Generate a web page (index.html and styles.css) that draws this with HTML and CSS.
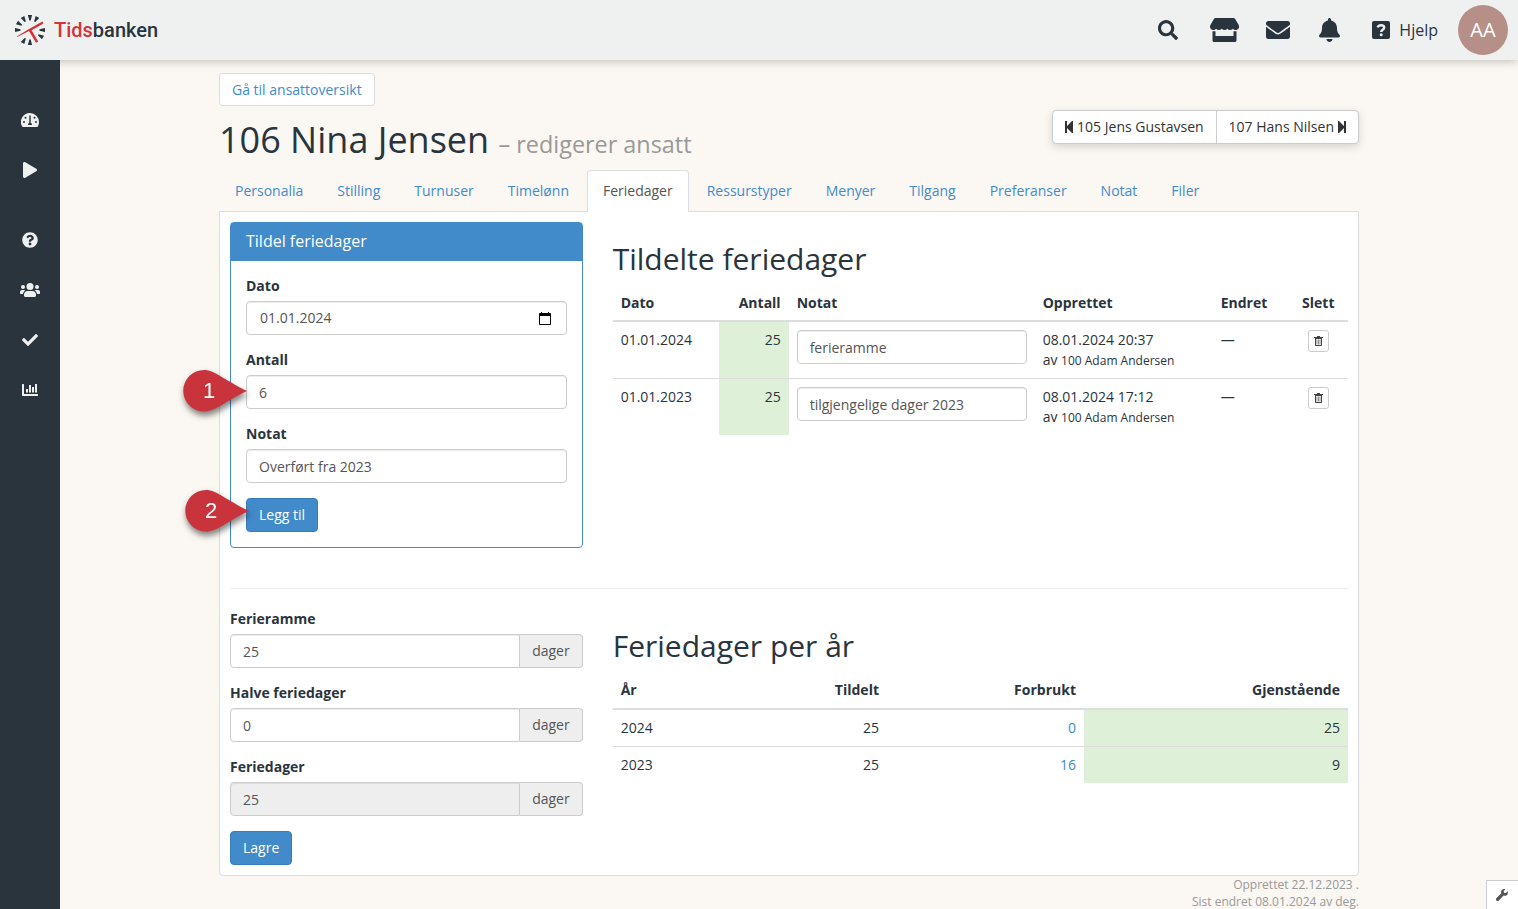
FILE: index.html
```html
<!DOCTYPE html>
<html lang="nb">
<head>
<meta charset="utf-8">
<title>106 Nina Jensen – Tidsbanken</title>
<meta name="viewport" content="width=device-width, initial-scale=1">
<link rel="stylesheet" href="styles.css">
</head>
<body>
<header class="topbar">
  <a class="brand" href="#" aria-label="Tidsbanken">
    <svg class="brand-mark" viewBox="0 0 32 32" aria-hidden="true">
      <g fill="#2a343d">
        <path d="M13.900 1h4.200L16.700 6.500h-1.400z"/>
        <path d="M13.900 1h4.200L16.700 6.500h-1.400z" transform="rotate(30 16 16)"/>
        <path d="M13.900 1h4.200L16.700 6.500h-1.400z" transform="rotate(90 16 16)"/>
        <path d="M13.900 1h4.200L16.700 6.500h-1.400z" transform="rotate(120 16 16)"/>
        <path d="M13.900 1h4.200L16.700 6.500h-1.400z" transform="rotate(180 16 16)"/>
        <path d="M13.900 1h4.200L16.700 6.500h-1.400z" transform="rotate(210 16 16)"/>
        <path d="M13.900 1h4.200L16.700 6.500h-1.400z" transform="rotate(270 16 16)"/>
        <path d="M13.900 1h4.200L16.700 6.500h-1.400z" transform="rotate(300 16 16)"/>
        <path d="M13.900 1h4.200L16.700 6.500h-1.400z" transform="rotate(330 16 16)"/>
      </g>
      <path d="M2.800 22.400L15 15 28.400 7.600l1.100 2L17.600 16.200l6.600 11.400-2.200 1.200L15 17 3.200 23z" fill="#d2333b"/>
    </svg>
    <span class="brand-name"><span class="brand-red">Tids</span>banken</span>
  </a>
  <nav class="tools" aria-label="Verktøy">
    <button class="tool" aria-label="Søk"><svg width="20" height="20" viewBox="0 0 512 512"><path d="M505 442.7L405.3 343c-4.5-4.5-10.6-7-17-7H372c27.6-35.3 44-79.7 44-128C416 93.1 322.9 0 208 0S0 93.1 0 208s93.1 208 208 208c48.300 0 92.700-16.400 128-44v16.300c0 6.400 2.500 12.500 7 17l99.700 99.700c9.400 9.400 24.600 9.400 33.900 0l28.300-28.300c9.400-9.400 9.400-24.600.1-34zM208 336c-70.700 0-128-57.200-128-128 0-70.700 57.200-128 128-128 70.700 0 128 57.200 128 128 0 70.700-57.200 128-128 128z"/></svg></button>
    <button class="tool tool-shop" aria-label="Butikk"><svg width="30" height="24" viewBox="0 0 30 24"><path d="M5.500 0h18c.7 0 1.300.3 1.700.9l3.500 6.100c1 2.200 0 4.500-2.300 4.900-1.500.2-2.700-.3-3.500-1.200-1.400 1.600-4.100 1.600-5.600 0-1.400 1.600-4.100 1.600-5.600 0-1.500 1.600-4.200 1.600-5.600 0-.8.900-2 1.400-3.500 1.200C.4 11.500-.6 9.200.4 7L3.900.9C4.200.3 4.800 0 5.500 0z"/><path d="M2.500 13.200h3V18h18v-4.800h3v9.300c0 .8-.7 1.500-1.500 1.500H4c-.8 0-1.500-.7-1.500-1.500z"/></svg></button>
    <button class="tool tool-mail" aria-label="Meldinger"><svg width="24" height="24" viewBox="0 0 512 512"><path d="M502.300 190.800c3.900-3.100 9.700-.2 9.700 4.700V400c0 26.500-21.500 48-48 48H48c-26.500 0-48-21.500-48-48V195.600c0-5 5.700-7.800 9.700-4.700 22.400 17.400 52.100 39.500 154.100 113.600 21.100 15.400 56.700 47.800 92.200 47.600 35.700.3 72-32.800 92.300-47.600 102-74.100 131.600-96.300 154-113.700zM256 320c23.200.4 56.600-29.200 73.400-41.400 132.700-96.300 142.800-104.700 173.400-128.700 5.800-4.500 9.200-11.500 9.200-18.900v-19c0-26.500-21.500-48-48-48H48c-26.500 0-48 21.500-48 48v19c0 7.400 3.400 14.300 9.200 18.900 30.600 23.900 40.700 32.400 173.400 128.700 16.800 12.200 50.200 41.800 73.400 41.400z"/></svg></button>
    <button class="tool" aria-label="Varsler"><svg width="21" height="24" viewBox="0 0 448 512"><path d="M224 512c35.320 0 63.970-28.650 63.970-64H160.030c0 35.350 28.650 64 63.970 64zm215.390-149.710c-19.320-20.760-55.470-51.990-55.470-154.290 0-77.700-54.480-139.900-127.940-155.160V32c0-17.670-14.320-32-31.980-32s-31.980 14.330-31.980 32v20.840C118.560 68.100 64.080 130.300 64.080 208c0 102.300-36.150 133.530-55.470 154.290-6 6.450-8.660 14.160-8.610 21.710.11 16.400 12.980 32 32.100 32h383.800c19.120 0 32-15.600 32.100-32 .05-7.550-2.610-15.270-8.610-21.710z"/></svg></button>
    <a class="help" href="#"><svg width="18" height="18" viewBox="0 0 18 18" aria-hidden="true"><rect width="18" height="18" rx="2"/><path d="M5.600 6.400C6.200 4.800 7.500 4.200 9.100 4.200c1.900 0 3.100.9 3.100 2.400 0 2.200-3 2.100-3 4.300" fill="none" stroke="#eff1f1" stroke-width="2.400"/><circle cx="9.200" cy="13.800" r="1.500" fill="#eff1f1"/></svg>Hjelp</a>
    <button class="avatar">AA</button>
  </nav>
</header>
<div class="shell">
  <nav class="sidebar" aria-label="Hovedmeny">
    <a href="#" aria-label="Oversikt"><svg width="18" height="14" viewBox="0 0 18 14"><path fill-rule="evenodd" d="M9 0a9 9 0 0 1 9 9c0 1.800-.5 3.300-1.200 4.600-.2.300-.4.400-.8.400H2c-.4 0-.6-.1-.8-.4A9 9 0 0 1 9 0zM8.300 2.500v7.200a2 2 0 0 0-1.200 2.300h3.800a2 2 0 0 0-1.200-2.300V2.500zM4.500 3.700a1 1 0 1 0 0 2 1 1 0 0 0 0-2zm9 0a1 1 0 1 0 0 2 1 1 0 0 0 0-2zM3 8a1 1 0 1 0 0 2 1 1 0 0 0 0-2zm12 0a1 1 0 1 0 0 2 1 1 0 0 0 0-2z"/></svg></a>
    <a href="#" aria-label="Start"><svg width="14" height="16" viewBox="0 0 448 512"><path d="M424.400 214.700L72.400 6.600C43.800-10.300 0 6.100 0 47.900V464c0 37.500 40.700 60.100 72.400 41.300l352-208c31.400-18.500 31.500-64.100 0-82.600z"/></svg></a>
    <a class="group-start" href="#" aria-label="Hjelp"><svg width="16" height="16" viewBox="0 0 512 512"><path d="M504 256c0 136.997-111.043 248-248 248S8 392.997 8 256C8 119.083 119.043 8 256 8s248 111.083 248 248zM262.655 90c-54.497 0-89.255 22.957-116.549 63.758-3.536 5.286-2.353 12.415 2.715 16.258l34.699 26.310c5.205 3.947 12.621 3.008 16.665-2.122 17.864-22.658 30.113-35.797 57.303-35.797 20.429 0 45.698 13.148 45.698 32.958 0 14.976-12.363 22.667-32.534 33.976C247.128 238.528 216 254.941 216 296v4c0 6.627 5.373 12 12 12h56c6.627 0 12-5.373 12-12v-1.333c0-28.462 83.186-29.647 83.186-106.667 0-58.002-60.165-102-116.531-102zM256 338c-25.365 0-46 20.635-46 46 0 25.364 20.635 46 46 46s46-20.636 46-46c0-25.365-20.635-46-46-46z"/></svg></a>
    <a href="#" aria-label="Ansatte"><svg width="20" height="14" viewBox="0 0 20 14"><circle cx="3" cy="4" r="2"/><circle cx="17" cy="4" r="2"/><circle cx="10" cy="3.500" r="3.500"/><path d="M2 7h2c.5 0 1 .2 1.400.6C4.100 8.300 3.200 9.500 3 11H1c-.6 0-1-.4-1-1V9c0-1.100.9-2 2-2zM16 7h2c1.100 0 2 .9 2 2v1c0 .6-.4 1-1 1h-2c-.2-1.500-1.100-2.700-2.400-3.400.4-.4.900-.6 1.400-.6zM7.600 8h4.800c2 0 3.600 1.600 3.600 3.600v.9c0 .8-.7 1.500-1.500 1.500h-9c-.8 0-1.500-.7-1.500-1.500v-.9C4 9.600 5.600 8 7.600 8z"/></svg></a>
    <a href="#" aria-label="Godkjenning"><svg width="16" height="16" viewBox="0 0 512 512"><path d="M173.898 439.404l-166.400-166.400c-9.997-9.997-9.997-26.206 0-36.204l36.203-36.204c9.997-9.998 26.207-9.998 36.204 0L192 312.690 432.095 72.596c9.997-9.997 26.207-9.997 36.204 0l36.203 36.204c9.997 9.997 9.997 26.206 0 36.204l-294.400 294.401c-9.998 9.997-26.207 9.997-36.204-.001z"/></svg></a>
    <a href="#" aria-label="Rapporter"><svg width="16" height="12" viewBox="0 0 16 12"><path d="M0 .5C0 .2.200 0 .500 0h1c.3 0 .5.200.500.500V10h13.500c.3 0 .5.200.500.500v1c0 .3-.2.500-.5.500H1c-.6 0-1-.4-1-1zM4 5h2v3.500H4zM7 1h2v7.500H7zM10 3h2v5.500h-2zM13 0h2v8.500h-2z"/></svg></a>
  </nav>
  <main class="main">
    <div class="page">
      <a class="btn btn-link-out" href="#">Gå til ansattoversikt</a>
      <div class="title-row">
        <h1>106 Nina Jensen <small>– redigerer ansatt</small></h1>
        <div class="pager">
          <a href="#"><svg width="8" height="12" viewBox="0 0 8 12" aria-hidden="true"><path d="M0 0h2v5l5-5h1v12H7L2 7v5H0z"/></svg>105 Jens Gustavsen</a>
          <a href="#">107 Hans Nilsen<svg width="8" height="12" viewBox="0 0 8 12" aria-hidden="true"><path d="M8 0H6v5L1 0H0v12h1l5-5v5h2z"/></svg></a>
        </div>
      </div>
      <nav class="tabs" aria-label="Ansatt">
        <a href="#">Personalia</a><a href="#">Stilling</a><a href="#">Turnuser</a><a href="#">Timelønn</a><a class="active" href="#" aria-current="page">Feriedager</a><a href="#">Ressurstyper</a><a href="#">Menyer</a><a href="#">Tilgang</a><a href="#">Preferanser</a><a href="#">Notat</a><a href="#">Filer</a>
      </nav>
      <section class="card">
        <div class="row">
          <div class="col">
            <form class="panel">
              <h3 class="panel-title">Tildel feriedager</h3>
              <div class="panel-body">
                <div class="field">
                  <label for="dato">Dato</label>
                  <div class="control date">
                    <input id="dato" type="text" value="01.01.2024">
                    <button type="button" aria-label="Velg dato"><svg width="12" height="13" viewBox="0 0 12 13"><path fill-rule="evenodd" d="M2 0h1v1h6V0h1v1h1c.6 0 1 .4 1 1v10c0 .6-.4 1-1 1H1c-.6 0-1-.4-1-1V2c0-.6.4-1 1-1h1zM1 4v8h10V4z"/></svg></button>
                  </div>
                </div>
                <div class="field">
                  <label for="antall">Antall</label>
                  <input class="control" id="antall" type="text" value="6">
                  <svg class="pin" width="72" height="54" viewBox="0 0 72 54"><path d="M24 4C35 4 44 14 67 25 44 36 35 45.500 24 45.500A20.700 20.700 0 0 1 24 4z"/><text x="29" y="32">1</text></svg>
                </div>
                <div class="field">
                  <label for="notat">Notat</label>
                  <input class="control" id="notat" type="text" value="Overført fra 2023">
                </div>
                <div class="action">
                  <button class="btn btn-primary" type="button">Legg til</button>
                  <svg class="pin" width="72" height="54" viewBox="0 0 72 54"><path d="M24 4C35 4 44 14 67 25 44 36 35 45.500 24 45.500A20.700 20.700 0 0 1 24 4z"/><text x="29" y="32">2</text></svg>
                </div>
              </div>
            </form>
          </div>
          <div class="col">
            <h2>Tildelte feriedager</h2>
            <table class="grants">
              <thead><tr><th class="w-date">Dato</th><th class="w-count num">Antall</th><th class="w-note">Notat</th><th class="w-made">Opprettet</th><th class="w-edit">Endret</th><th class="mid">Slett</th></tr></thead>
              <tbody>
                <tr><td>01.01.2024</td><td class="num ok">25</td><td><input class="control" type="text" value="ferieramme" aria-label="Notat 2024"></td><td>08.01.2024 20:37<br>av <small>100 Adam Andersen</small></td><td>—</td><td class="mid"><button class="btn-trash" aria-label="Slett"><svg width="9" height="10" viewBox="0 0 9 10"><path fill-rule="evenodd" d="M3 0h3v1h3v1H8v7c0 .6-.4 1-1 1H2c-.6 0-1-.4-1-1V2H0V1h3zM2 3v6h5V3z"/><path d="M3 3.500v5M4.500 3.500v5M6 3.500v5" stroke="currentColor" stroke-width=".6"/></svg></button></td></tr>
                <tr><td>01.01.2023</td><td class="num ok">25</td><td><input class="control" type="text" value="tilgjengelige dager 2023" aria-label="Notat 2023"></td><td>08.01.2024 17:12<br>av <small>100 Adam Andersen</small></td><td>—</td><td class="mid"><button class="btn-trash" aria-label="Slett"><svg width="9" height="10" viewBox="0 0 9 10"><path fill-rule="evenodd" d="M3 0h3v1h3v1H8v7c0 .6-.4 1-1 1H2c-.6 0-1-.4-1-1V2H0V1h3zM2 3v6h5V3z"/><path d="M3 3.500v5M4.500 3.500v5M6 3.500v5" stroke="currentColor" stroke-width=".6"/></svg></button></td></tr>
              </tbody>
            </table>
          </div>
        </div>
        <hr>
        <div class="row">
          <form class="col">
            <div class="field">
              <label for="ramme">Ferieramme</label>
              <div class="group"><input class="control" id="ramme" type="text" value="25"><span>dager</span></div>
            </div>
            <div class="field">
              <label for="halve">Halve feriedager</label>
              <div class="group"><input class="control" id="halve" type="text" value="0"><span>dager</span></div>
            </div>
            <div class="field">
              <label for="dager">Feriedager</label>
              <div class="group"><input class="control" id="dager" type="text" value="25" readonly><span>dager</span></div>
            </div>
            <button class="btn btn-primary" type="button">Lagre</button>
          </form>
          <div class="col">
            <h2>Feriedager per år</h2>
            <table class="years">
              <thead><tr><th class="w-year">År</th><th class="num">Tildelt</th><th class="w-used num">Forbrukt</th><th class="w-left num">Gjenstående</th></tr></thead>
              <tbody>
                <tr><td>2024</td><td class="num">25</td><td class="num"><a href="#">0</a></td><td class="num ok">25</td></tr>
                <tr><td>2023</td><td class="num">25</td><td class="num"><a href="#">16</a></td><td class="num ok">9</td></tr>
              </tbody>
            </table>
          </div>
        </div>
      </section>
      <footer class="audit">Opprettet 22.12.2023 .<br>Sist endret 08.01.2024 av deg.</footer>
    </div>
  </main>
</div>
<button class="settings" aria-label="Innstillinger"><svg width="12" height="12" viewBox="0 0 12 12"><path d="M11.600 2.200L9.800 4 8 3.700 7.700 2 9.500.3C8.200-.2 6.700 0 5.800 1.100 5 2 4.900 3.200 5.300 4.300L.5 9.100c-.7.7-.7 1.600-.1 2.300.7.700 1.700.7 2.400 0l4.800-4.800c1.200.5 2.500.3 3.400-.6 1-1 1.200-2.600.6-3.800z"/></svg></button>
</body>
</html>
```
FILE: styles.css
```css
* { box-sizing: border-box; }

body {
  margin: 0;
  height: 100vh;
  display: flex;
  flex-direction: column;
  background: #fbf7f2;
  color: #2a343d;
  font: 14px/20px "Open Sans", "Noto Sans", sans-serif;
}

button, input { font: inherit; color: inherit; }
button { cursor: pointer; }
a { color: #428bca; text-decoration: none; }
svg { display: block; fill: currentColor; flex: none; }

/* Top bar */
.topbar {
  flex: none;
  height: 60px;
  display: flex;
  align-items: center;
  justify-content: space-between;
  padding: 0 10px 0 14px;
  background: #eff1f1;
  box-shadow: 0 0 10px rgba(0, 0, 0, .3);
  position: relative;
  z-index: 2;
}
.brand { display: flex; align-items: center; gap: 8px; color: #2a343d; }
.brand-mark { width: 32px; height: 32px; }
.brand-name { font: 500 20px/30px Roboto, sans-serif; }
.brand-red { color: #d2333b; }
.tools { display: flex; align-items: center; }
.tool {
  display: flex;
  padding: 0;
  margin-right: 32px;
  border: 0;
  background: none;
}
.tool-shop { margin-right: 26px; }
.tool-mail { margin-right: 29px; }
.help {
  display: flex;
  align-items: center;
  gap: 9px;
  margin-right: 20px;
  color: #2a343d;
  font-size: 16px;
}
.avatar {
  width: 50px;
  height: 50px;
  padding: 0;
  border: 0;
  border-radius: 50%;
  background: #b58f88;
  color: #fff;
  font-size: 20px;
}

/* Sidebar and page */
.shell { flex: 1; min-height: 0; display: flex; }
.sidebar {
  flex: none;
  width: 60px;
  padding-top: 35px;
  background: #2a343d;
  position: relative;
  z-index: 3;
}
.sidebar a {
  display: flex;
  align-items: center;
  justify-content: center;
  height: 50px;
  color: #eff1f1;
}
.sidebar .group-start { margin-top: 20px; }
.main { flex: 1; min-width: 0; overflow-y: auto; scrollbar-width: none; }
.page { max-width: 1140px; margin: 0 auto; padding-top: 13px; }

.btn {
  display: inline-block;
  padding: 6px 12px;
  border: 1px solid #ddd;
  border-radius: 4px;
  background: #fff;
  line-height: 20px;
}
.btn-link-out { padding: 5px 12px; line-height: 21px; border-radius: 3px; vertical-align: top; }
.btn-primary { display: block; background: #428bca; border-color: #357ebd; color: #fff; }

.title-row { display: flex; justify-content: space-between; align-items: flex-start; }
h1, h2, h3 { font-weight: 400; }
h1 { margin: 14px 0 10px; font-size: 36px; line-height: 40px; }
h1 small { font-size: 65%; line-height: 24px; color: #999; }
.pager {
  display: flex;
  margin-top: 4px;
  border: 1px solid #ccc;
  border-radius: 4px;
  background: #fff;
  box-shadow: 0 3px 8px rgba(0, 0, 0, .15);
}
.pager a { display: flex; align-items: center; gap: 4px; padding: 6px 12px; color: #333; }
.pager a + a { border-left: 1px solid #ccc; }

.tabs { display: flex; gap: 2px; margin-bottom: -1px; position: relative; }
.tabs a { padding: 10px 15px; border: 1px solid transparent; border-radius: 4px 4px 0 0; }
.tabs .active { background: #fff; border-color: #ddd #ddd #fff; color: #555; }

.card {
  padding: 10px;
  border: 1px solid #ddd;
  border-radius: 0 0 4px 4px;
  background: #fff;
}
.row { display: grid; grid-template-columns: 1fr 2fr; margin: 0 -15px; }
.col { min-width: 0; padding: 0 15px; }
hr { margin: 40px 0 20px; border: 0; border-top: 1px solid #eee; }
h2 { margin: 20px 0 10px; font-size: 30px; line-height: 33px; }

/* Forms */
.panel { border: 1px solid #428bca; border-radius: 4px; }
.panel-title {
  margin: 0;
  padding: 9px 15px 10px;
  background: #428bca;
  color: #fff;
  font-size: 16px;
  line-height: 19px;
}
.panel-body { padding: 15px; }
.field { position: relative; margin-bottom: 15px; }
.field label { display: block; margin-bottom: 5px; font-weight: 700; }
.control {
  display: block;
  width: 100%;
  height: 34px;
  padding: 6px 12px;
  border: 1px solid #ccc;
  border-radius: 4px;
  background: #fff;
  color: #555;
  box-shadow: inset 0 1px 1px rgba(0, 0, 0, .075);
}
.date { display: flex; align-items: center; padding: 0 15px 0 13px; }
.date input { flex: 1; min-width: 0; padding: 0; border: 0; background: none; outline: 0; }
.date button { padding: 0; border: 0; background: none; color: #000; }
.group { display: flex; }
.group .control { flex: 1; min-width: 0; border-radius: 4px 0 0 4px; }
.group .control:read-only { background: #eee; }
.group span {
  padding: 6px 12px;
  border: 1px solid #ccc;
  border-left: 0;
  border-radius: 0 4px 4px 0;
  background: #eee;
  color: #555;
}
.action { position: relative; }

/* Numbered step markers over the form */
.pin {
  position: absolute;
  right: calc(100% - 6px);
  bottom: -11px;
  fill: #c9343c;
  filter: drop-shadow(1px 4px 3px rgba(0, 0, 0, .5));
}
.action .pin { right: calc(100% - 8px); bottom: -8px; }
.pin text { fill: #fff; font: 22px "Liberation Sans", sans-serif; text-anchor: middle; }

/* Tables */
table { width: 100%; border-collapse: separate; border-spacing: 0; table-layout: fixed; }
th, td { padding: 8px; text-align: left; vertical-align: top; }
th { border-bottom: 2px solid #ddd; font-weight: 700; }
tr + tr td { border-top: 1px solid #ddd; }
td small { font-size: 12px; line-height: 1; }
.grants thead th { padding-bottom: 7px; }
.num { text-align: right; }
.mid { text-align: center; }
.ok { background: #dff0d8; }
.w-date { width: 106px; }
.w-count { width: 70px; }
.w-note { width: 246px; }
.w-made { width: 178px; }
.w-edit { width: 76px; }
.w-year { width: 16%; }
.w-used { width: 27%; }
.w-left { width: 36%; }
.years .w-year { width: 120px; }
.years .w-used { width: 197px; }
.years .w-left { width: 264px; }
.btn-trash {
  display: inline-flex;
  padding: 5px;
  border: 1px solid #ccc;
  border-radius: 3px;
  background: #fff;
  color: #444;
  vertical-align: top;
}

.audit { color: #999; font-size: 12px; line-height: 17px; text-align: right; }

.settings {
  position: fixed;
  right: 0;
  bottom: 0;
  width: 32px;
  height: 29px;
  padding: 0 0 0 9px;
  border: 1px solid #ccc;
  border-width: 1px 0 0 1px;
  background: #fff;
  color: #555;
}
```
